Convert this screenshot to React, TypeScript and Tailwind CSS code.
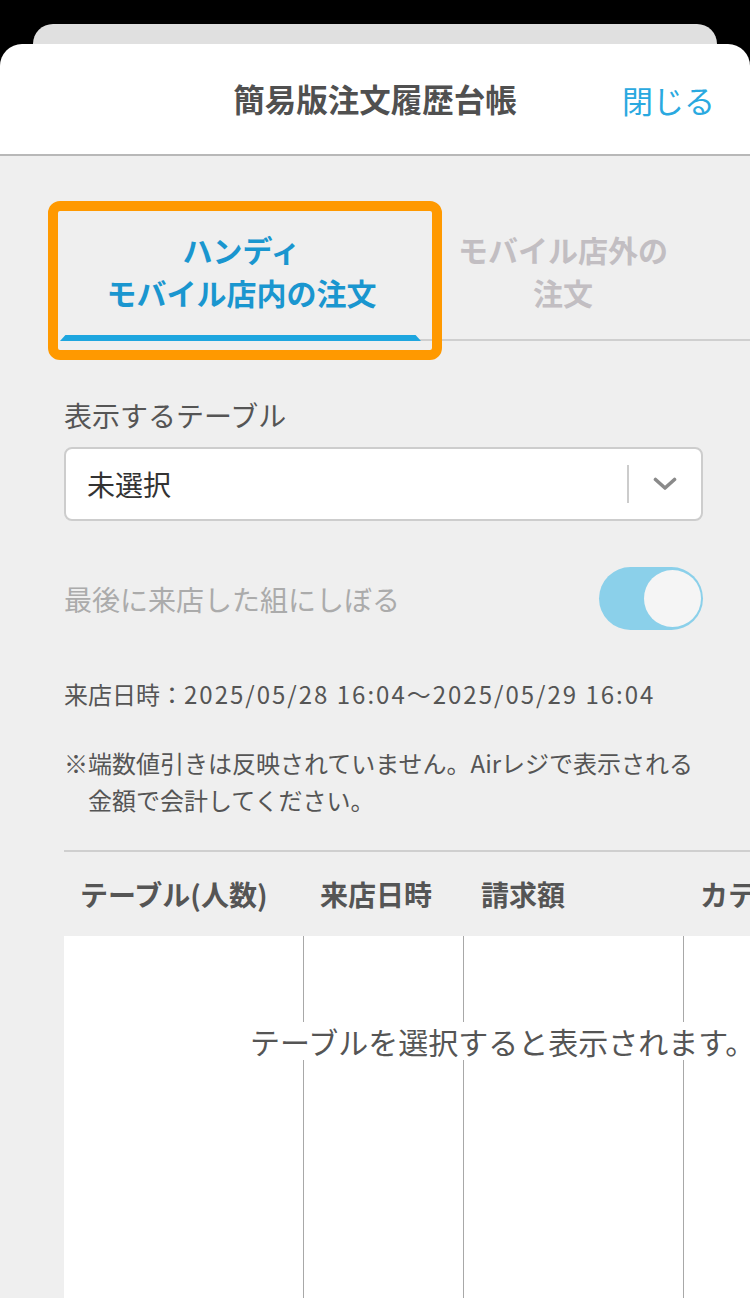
import React from "react";

export default function App() {
  return (
    <div className="w-[750px] h-[1298px] bg-black overflow-hidden flex flex-col font-['Noto_Sans_CJK_JP','Noto_Sans',sans-serif]">
      <div className="mx-[33px] mt-[24px] h-[20px] shrink-0 bg-[#e0e0e0] rounded-t-[22px]" />
      <div className="flex-1 flex flex-col bg-white rounded-t-[22px] overflow-hidden">
        {/* Header */}
        <div className="h-[112px] shrink-0 grid grid-cols-[1fr_auto_1fr] items-center border-b-2 border-[#b8b8b8]">
          <div />
          <div className="text-[31.5px] font-bold text-[#505050] leading-none">簡易版注文履歴台帳</div>
          <div className="flex justify-end pr-[35px]">
            <span className="text-[31px] text-[#2aa9e0] leading-none">閉じる</span>
          </div>
        </div>

        {/* Body */}
        <div className="flex-1 flex flex-col bg-[#efefef] pl-[64px] pr-[47px] pt-[49px] overflow-hidden">
          {/* Tabs */}
          <div className="relative -mr-[47px] flex border-b-2 border-[#cfcfcf] h-[136px] shrink-0">
            <div className="absolute -left-[16px] -top-[4px] w-[394px] h-[159px] border-[10px] border-[#ff9900] rounded-[12px] z-10 pointer-events-none" />
            <div className="relative w-[355px] flex items-center justify-center text-center">
              <div className="text-[30px] font-bold leading-[43px] text-[#1a96cf] -mt-[3px]">
                ハンディ
                <br />
                モバイル店内の注文
              </div>
              <div className="absolute left-[-4px] right-[-2px] -bottom-[2px] h-[6px] bg-[#1ea6df] [clip-path:polygon(1.5%_0,98.5%_0,100%_100%,0_100%)]" />
            </div>
            <div className="w-[288px] flex items-center justify-center text-center">
              <div className="text-[30px] font-bold leading-[43px] text-[#c2bec2] -mt-[3px]">
                モバイル店外の
                <br />
                注文
              </div>
            </div>
          </div>

          {/* Table select */}
          <div className="mt-[54px] text-[28px] leading-[40px] text-[#555]">表示するテーブル</div>
          <div className="mt-[12px] h-[74px] shrink-0 bg-white border-2 border-[#cdcdcd] rounded-[8px] flex items-center">
            <span className="flex-1 pl-[21px] text-[28px] text-[#333] leading-none">未選択</span>
            <div className="w-[2px] h-[38px] bg-[#cccccc]" />
            <div className="w-[72px] flex items-center justify-center">
              <svg width="24" height="14" viewBox="0 0 24 14" fill="none">
                <path d="M2.5 2.5 L12 11 L21.5 2.5" stroke="#8a8a8a" strokeWidth="3.6" strokeLinecap="round" strokeLinejoin="round" />
              </svg>
            </div>
          </div>

          {/* Toggle row */}
          <div className="mt-[46px] flex items-center justify-between">
            <span className="text-[28px] text-[#ababab] leading-none">最後に来店した組にしぼる</span>
            <div className="w-[104px] h-[63px] rounded-full bg-[#8bd0ea] flex justify-end items-center pr-[2px]">
              <div className="w-[57px] h-[57px] rounded-full bg-[#f5f5f5]" />
            </div>
          </div>

          {/* Date */}
          <div className="mt-[45px] text-[24px] leading-[37px] text-[#555]">
            来店日時：<span className="tracking-[2px]">2025/05/28 16:04〜2025/05/29 16:04</span>
          </div>

          {/* Note */}
          <div className="mt-[32px] flex text-[24px] leading-[37px] text-[#555]">
            <span className="w-[24px] shrink-0">※</span>
            <span>
              端数値引きは反映されていません。Airレジで表示される
              <br />
              金額で会計してください。
            </span>
          </div>

          {/* Table */}
          <div className="mt-[32px] -mr-[47px] flex-1 flex flex-col border-t-2 border-[#cfcfcf] overflow-hidden">
            <div className="w-[860px] h-[84px] shrink-0 flex items-center text-[28px] font-bold text-[#555] leading-none">
              <div className="w-[239px] pl-[16px] whitespace-nowrap">テーブル(人数)</div>
              <div className="w-[160px] pl-[17px] whitespace-nowrap">来店日時</div>
              <div className="w-[220px] pl-[18px] whitespace-nowrap">請求額</div>
              <div className="flex-1 pl-[17px] whitespace-nowrap">カテゴリ</div>
            </div>
            <div className="relative w-[860px] flex-1 flex bg-white">
              <div className="w-[239px]" />
              <div className="w-[160px] border-l border-[#a8a8a8]" />
              <div className="w-[220px] border-l border-[#a8a8a8]" />
              <div className="flex-1 border-l border-[#a8a8a8]" />
              <div className="absolute left-[186px] top-[86px] bg-white text-[30px] leading-[38px] text-[#555] whitespace-nowrap">
                テーブルを選択すると表示されます。
              </div>
            </div>
          </div>
        </div>
      </div>
    </div>
  );
}
